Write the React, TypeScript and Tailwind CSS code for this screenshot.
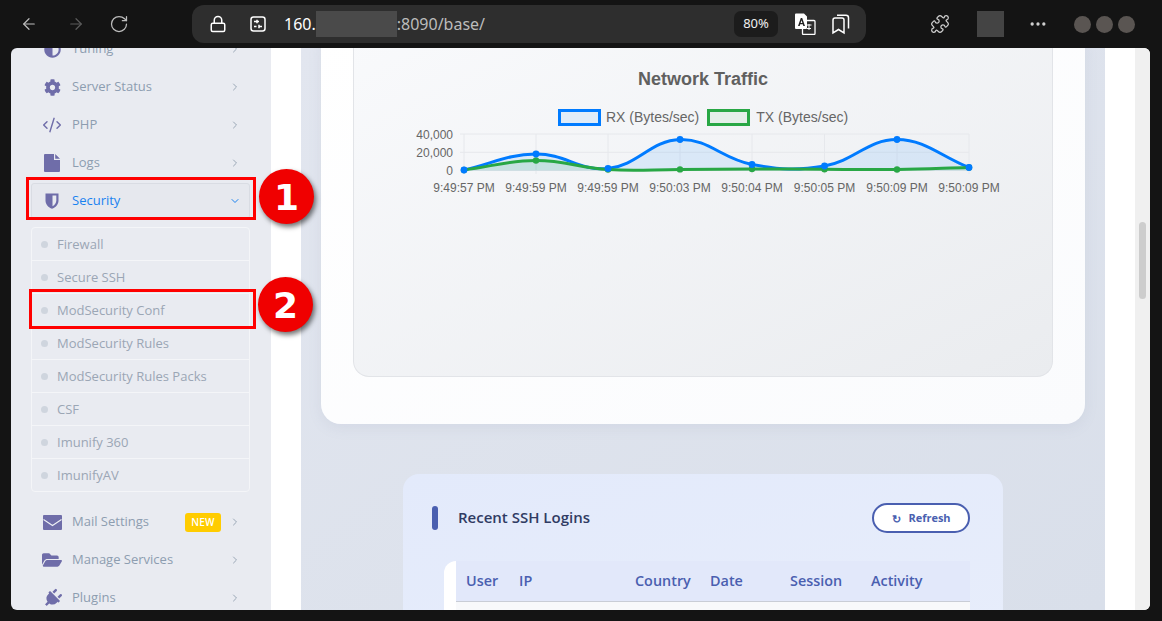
import React from "react";
import { ArrowLeft, ArrowRight, RotateCw, Lock, Puzzle, MoreHorizontal, ChevronRight, ChevronDown, CodeXml } from "lucide-react";
import { FaAdjust, FaCog, FaFolderOpen, FaPlug } from "react-icons/fa";

const XS = [464, 536, 608, 680, 752, 824.5, 897, 969];
const RX = [170, 154, 168.5, 139.5, 164.5, 166, 139.5, 167.5];
const TX = [170, 160.5, 169.5, 169.4, 169, 169.2, 169.5, 167.5];
const OX = 400;
const OY = 125;

function spline(ys: number[]) {
  const t = 0.4;
  const p = XS.map((x, i) => [x - OX, ys[i] - OY]);
  const cps = p.map((c, i) => {
    const a = p[i - 1] || c;
    const b = p[i + 1] || c;
    const d1 = Math.hypot(c[0] - a[0], c[1] - a[1]);
    const d2 = Math.hypot(b[0] - c[0], b[1] - c[1]);
    const s = d1 + d2 || 1;
    return {
      prev: [c[0] - (t * d1 / s) * (b[0] - a[0]), c[1] - (t * d1 / s) * (b[1] - a[1])],
      next: [c[0] + (t * d2 / s) * (b[0] - a[0]), c[1] + (t * d2 / s) * (b[1] - a[1])],
    };
  });
  let d = `M${p[0][0]} ${p[0][1]}`;
  for (let i = 1; i < p.length; i++) {
    const n = cps[i - 1].next;
    const q = cps[i].prev;
    d += ` C${n[0].toFixed(1)} ${n[1].toFixed(1)} ${q[0].toFixed(1)} ${q[1].toFixed(1)} ${p[i][0]} ${p[i][1]}`;
  }
  return d;
}

function Chart() {
  const labels = ["9:49:57 PM", "9:49:59 PM", "9:49:59 PM", "9:50:03 PM", "9:50:04 PM", "9:50:05 PM", "9:50:09 PM", "9:50:09 PM"];
  const rx = spline(RX);
  const tx = spline(TX);
  const baseY = 170.5 - OY;
  const x0 = XS[0] - OX;
  const x1 = XS[7] - OX;
  return (
    <svg width="620" height="80" viewBox="0 0 620 80" className="block" style={{ fontFamily: "'Liberation Sans', Arial, sans-serif" }}>
      {[134, 152.3, 170.5].map((y) => (
        <line key={y} x1={x0 - 4} x2={x1} y1={y - OY} y2={y - OY} stroke="#e6e8ec" strokeWidth="1" />
      ))}
      {XS.map((x) => (
        <line key={x} x1={x - OX} x2={x - OX} y1={134 - OY} y2={174 - OY} stroke="#e6e8ec" strokeWidth="1" />
      ))}
      <path d={`${rx} L${x1} ${baseY} L${x0} ${baseY} Z`} fill="#007bff" fillOpacity="0.1" />
      <path d={`${tx} L${x1} ${baseY} L${x0} ${baseY} Z`} fill="#28a745" fillOpacity="0.12" />
      <path d={rx} fill="none" stroke="#007bff" strokeWidth="3" />
      <path d={tx} fill="none" stroke="#28a745" strokeWidth="3" />
      {XS.map((x, i) => (
        <circle key={x} cx={x - OX} cy={TX[i] - OY} r="3.2" fill="#28a745" />
      ))}
      {XS.map((x, i) => (
        <circle key={x} cx={x - OX} cy={RX[i] - OY} r="3.4" fill="#007bff" />
      ))}
      {["40,000", "20,000", "0"].map((s, i) => (
        <text key={s} x={53} y={[13.5, 31.5, 49.5][i]} textAnchor="end" fontSize="12" fill="#666">{s}</text>
      ))}
      {labels.map((s, i) => (
        <text key={i} x={XS[i] - OX} y={67} textAnchor="middle" fontSize="12" fill="#666">{s}</text>
      ))}
    </svg>
  );
}

function Row({ icon, label, badge }: { icon: React.ReactNode; label: string; badge?: boolean }) {
  return (
    <div className="flex h-[38px] items-center pl-[11px] pr-[9px] text-[13px] text-[#8d9db0]">
      <span className="flex w-[20px] justify-center text-[#6f6da9]">{icon}</span>
      <span className="ml-[10px] flex-1">{label}</span>
      {badge && (
        <span className="mr-[8px] flex h-[19px] w-[36px] items-center justify-center rounded-[3px] bg-[#ffcc00] text-[10px] font-semibold tracking-wide text-white">NEW</span>
      )}
      <ChevronRight size={12} strokeWidth={2} className="text-[#9aa7b6]" />
    </div>
  );
}

function FileIcon() {
  return (
    <svg width="16" height="18" viewBox="0 0 16 18">
      <path d="M1 0H10V6H16V17a1 1 0 0 1-1 1H1a1 1 0 0 1-1-1V1a1 1 0 0 1 1-1zM11.200 0L16 4.800H11.200z" fill="currentColor" />
    </svg>
  );
}

function MailIcon() {
  return (
    <svg width="19" height="15" viewBox="0 0 19 15">
      <rect width="19" height="15" rx="1" fill="currentColor" />
      <path d="M0.500 4.500L9.500 10.500L18.500 4.500" fill="none" stroke="#eef0f5" strokeWidth="1.1" />
    </svg>
  );
}

function ShieldIcon() {
  return (
    <svg width="14" height="16" viewBox="0 0 14 16">
      <path d="M0.500 0.500H13.500V7.500C13.500 11.500 10.500 14.500 7 15.800C3.500 14.500 0.500 11.500 0.500 7.500Z" fill="currentColor" />
      <path d="M7.500 2.500H11.300V7.500C11.300 10 9.800 12 7.500 13.200Z" fill="#e8eaf0" />
    </svg>
  );
}

const subs = ["Firewall", "Secure SSH", "ModSecurity Conf", "ModSecurity Rules", "ModSecurity Rules Packs", "CSF", "Imunify 360", "ImunifyAV"];

function Sidebar() {
  return (
    <aside className="w-[260px] shrink-0 overflow-hidden bg-[#e9ebf1] pl-[20px] pr-[21px]">
      <div className="-mt-[18px]">
        <Row icon={<FaAdjust size={17} />} label="Tuning" />
        <Row icon={<FaCog size={17} />} label="Server Status" />
        <Row icon={<CodeXml size={20} strokeWidth={1.7} />} label="PHP" />
        <Row icon={<FileIcon />} label="Logs" />
        <div className="mt-px flex h-[36px] items-center rounded-[3px] border border-[#d9dce3] bg-[#e6e8ee] pl-[10px] pr-[8px] text-[13px] text-[#1a82f0]">
          <span className="flex w-[20px] justify-center text-[#6f6da9]"><ShieldIcon /></span>
          <span className="ml-[10px] flex-1">Security</span>
          <ChevronDown size={12} strokeWidth={2} className="text-[#1a82f0]" />
        </div>
        <div className="mt-[8px] rounded-[4px] border border-[#f4f5f8]">
          {subs.map((s, i) => (
            <div key={s} className={`flex items-center pl-[9px] pt-[1px] text-[13px] text-[#9ba6b5] ${i < subs.length - 1 ? "h-[33px] border-b border-[#f4f5f8]" : "h-[32px]"}`}>
              <span className="h-[7px] w-[7px] rounded-full bg-[#cfd5de]" />
              <span className="ml-[9px]">{s}</span>
            </div>
          ))}
        </div>
        <div className="mt-[11px]">
          <Row icon={<MailIcon />} label="Mail Settings" badge />
          <Row icon={<FaFolderOpen size={20} />} label="Manage Services" />
          <Row icon={<FaPlug size={19} className="rotate-45" />} label="Plugins" />
        </div>
      </div>
    </aside>
  );
}

function Main() {
  const heads: [string, string][] = [
    ["User", "w-[53px]"],
    ["IP", "w-[116px]"],
    ["Country", "w-[75px]"],
    ["Date", "w-[80px]"],
    ["Session", "w-[81px]"],
    ["Activity", "w-auto"],
  ];
  return (
    <div className="flex min-w-0 flex-1 bg-white">
      <div className="w-[30px] shrink-0 bg-white" />
      <main className="h-full w-[804px] shrink-0 overflow-hidden bg-gradient-to-br from-[#e2e6ef] to-[#d9dfea] px-[20px]">
        <section className="-mt-[20px] h-[396px] rounded-[20px] bg-gradient-to-br from-white to-[#fafbfd] px-[32px] shadow-[0_4px_14px_rgba(120,130,160,0.10)]">
          <div className="h-[349px] rounded-b-[16px] border border-t-0 border-[#e2e4e8] bg-gradient-to-br from-[#f9fafc] to-[#eaecef]" style={{ fontFamily: "'Liberation Sans', Arial, sans-serif" }}>
            <h2 className="pt-[41px] h-[61px] text-center text-[18px] font-bold leading-[20px] text-[#606060]">Network Traffic</h2>
            <div className="mt-[20px] flex h-[17px] items-center justify-center text-[14px] text-[#666]">
              <span className="h-[17px] w-[43px] border-[3px] border-[#007bff] bg-[#e0ecf8]" />
              <span className="ml-[5px]">RX (Bytes/sec)</span>
              <span className="ml-[8px] h-[17px] w-[43px] border-[3px] border-[#28a745] bg-[#e4efe9]" />
              <span className="ml-[6px]">TX (Bytes/sec)</span>
            </div>
            <div className="ml-[46px] mt-[-1px]"><Chart /></div>
          </div>
        </section>
        <section className="mx-auto mt-[50px] h-[160px] w-[600px] rounded-t-[16px] bg-gradient-to-br from-[#e3eafb] to-[#e7edfb] pl-[29px] pr-[33px] pt-[29px]">
          <div className="flex h-[30px] items-center">
            <span className="h-[24px] w-[6px] rounded-full bg-[#4a5fb0]" />
            <h3 className="ml-[20px] flex-1 pb-[2px] text-[15px] font-semibold text-[#303b63]">Recent SSH Logins</h3>
            <button className="flex h-[30px] w-[98px] items-center justify-center gap-[7px] rounded-full border-2 border-[#4a5fb0] bg-white pl-[1px] text-[11px] font-bold text-[#4a5fb0]">
              <span className="text-[11px] leading-none">↻</span>
              Refresh
            </button>
          </div>
          <div className="ml-[12px] mt-[28px] rounded-tl-[12px] bg-white pl-[12px]">
            <div className="flex h-[41px] items-center border-b border-[#c9cdd6] bg-[#e2e8fa] pl-[10px] text-[14.4px] font-semibold text-[#4a5fb0]">
              {heads.map(([h, w]) => (
                <span key={h} className={w}>{h}</span>
              ))}
            </div>
            <div className="h-[10px] bg-[#f8f9fb]" />
          </div>
        </section>
      </main>
      <div className="w-[30px] shrink-0 bg-white" />
      <div className="w-[15px] shrink-0 bg-[#f0f0f0] pl-[4px] pt-[174px]">
        <div className="h-[77px] w-[7px] rounded-full bg-[#cdcdcd]" />
      </div>
    </div>
  );
}

function Toolbar() {
  return (
    <header className="flex h-[48px] items-center text-[#d8d8d8]">
      <ArrowLeft size={18} strokeWidth={1.6} className="ml-[20px] text-[#bdbdbd]" />
      <ArrowRight size={18} strokeWidth={1.6} className="ml-[29px] text-[#5c5c5c]" />
      <RotateCw size={20} strokeWidth={1.5} className="ml-[24px] text-[#bdbdbd]" />
      <div className="ml-[63px] flex h-[38px] w-[674px] items-center rounded-[12px] bg-[#2e2e2e] pr-[16px]">
        <Lock size={18} strokeWidth={2} className="ml-[17px] text-white" />
        <svg width="16" height="16" viewBox="0 0 16 16" className="ml-[23px] text-white" fill="none" stroke="currentColor" strokeWidth="1.5">
          <rect x="1" y="1" width="14" height="14" rx="2.5" />
          <path d="M4 5.500H9M7 3.800V7.200M4 10.500H6.500M9 8.800V12.200M9 10.500H12" />
        </svg>
        <div className="ml-[18px] flex flex-1 items-center text-[16px] text-white" style={{ fontFamily: "'Noto Sans', sans-serif" }}>
          <span>160.</span>
          <span className="h-[26px] w-[81px] bg-[#4a4a4a]" />
          <span className="text-[#bcbcbc]">:8090/base/</span>
          <span className="ml-auto flex h-[26px] w-[44px] items-center justify-center rounded-[7px] bg-[#1c1c1c] text-[13px] text-[#f0f0f0]">80%</span>
        </div>
        <svg width="22" height="22" viewBox="0 0 22 22" className="ml-[16px]">
          <rect x="8.500" y="7.500" width="12.500" height="14" rx="1" fill="#2e2e2e" stroke="#fff" strokeWidth="1.3" />
          <path d="M1 1.500a1 1 0 0 1 1-1h8l3 3v11.500a1 1 0 0 1-1 1H2a1 1 0 0 1-1-1z" fill="#fff" />
          <path d="M4 13l2.800-8h1.400l2.800 8h-1.700l-.5-1.700H6.200L5.700 13zM6.600 10h1.800l-.9-2.800z" fill="#222" />
          <path d="M12.500 12h5M15 11v6M13 15.500h4" stroke="#fff" strokeWidth="1" fill="none" />
        </svg>
        <svg width="18" height="22" viewBox="0 0 18 22" className="ml-[16px]" fill="none" stroke="#fff" strokeWidth="1.5">
          <path d="M1 7a2 2 0 0 1 2-2h7a2 2 0 0 1 2 2v13l-5.500-3.500L1 20z" />
          <path d="M5 2.200h9a2.500 2.500 0 0 1 2.500 2.500v10.800" />
        </svg>
      </div>
      <Puzzle size={20} strokeWidth={1.5} className="ml-[64px] text-[#cfcfcf]" />
      <span className="ml-[27px] h-[26px] w-[27px] bg-[#444]" />
      <MoreHorizontal size={20} strokeWidth={2} className="ml-[24px] text-[#cfcfcf]" />
      <div className="ml-[26px] flex gap-[5px]">
        <span className="h-[17px] w-[17px] rounded-full bg-[#5a5552]" />
        <span className="h-[17px] w-[17px] rounded-full bg-[#5a5552]" />
        <span className="h-[17px] w-[17px] rounded-full bg-[#5a5552]" />
      </div>
    </header>
  );
}

function Badge({ n, className }: { n: string; className: string }) {
  return (
    <div
      className={`absolute flex h-[55px] w-[55px] items-center justify-center rounded-full bg-[#f00000] pt-[2px] text-[36px] font-bold leading-none text-white shadow-[2px_3px_5px_rgba(0,0,0,0.55)] ${className}`}
      style={{ fontFamily: "'DejaVu Sans', sans-serif" }}
    >
      {n}
    </div>
  );
}

export default function App() {
  return (
    <div className="relative h-[621px] w-[1162px] overflow-hidden bg-[#141414]" style={{ fontFamily: "'Open Sans', 'Noto Sans', sans-serif" }}>
      <Toolbar />
      <div className="ml-[11px] flex h-[562px] w-[1139px] overflow-hidden rounded-[6px]">
        <Sidebar />
        <Main />
      </div>
      <div className="absolute left-[26px] top-[177px] h-[43px] w-[230px] border-[3px] border-[#ff0000]" />
      <div className="absolute left-[29px] top-[289px] h-[40px] w-[227px] border-[3px] border-[#ff0000]" />
      <Badge n="1" className="left-[259px] top-[169px]" />
      <Badge n="2" className="left-[258px] top-[277px]" />
    </div>
  );
}
